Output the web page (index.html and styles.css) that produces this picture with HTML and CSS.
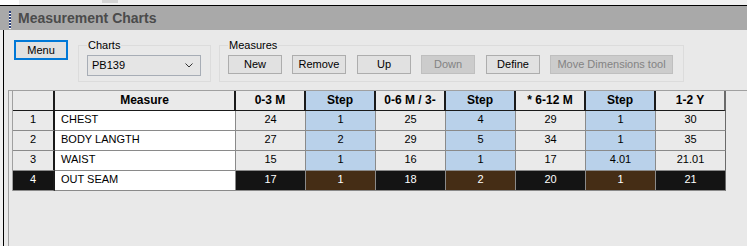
FILE: index.html
```html
<!DOCTYPE html>
<html>
<head>
<meta charset="utf-8">
<link rel="stylesheet" href="styles.css">
</head>
<body>
<div class="topstrip"><span class="ts-white"></span><span class="ts-thumb"></span></div>
<div class="titlebar"><span class="grip"></span><span class="title">Measurement Charts</span></div>
<div class="shell">
  <div class="content">
    <div class="toolbar">
      <button class="btn btn-menu">Menu</button>
      <fieldset class="group group-charts">
        <legend>Charts</legend>
        <div class="combo"><span>PB139</span><svg class="chev" width="8" height="5" viewBox="0 0 8 5"><path d="M0.5 0.5 L4 4 L7.5 0.5" fill="none" stroke="#333" stroke-width="1"/></svg></div>
      </fieldset>
      <fieldset class="group group-measures">
        <legend>Measures</legend>
        <div class="btnrow">
          <button class="btn">New</button>
          <button class="btn">Remove</button>
          <button class="btn">Up</button>
          <button class="btn btn-disabled">Down</button>
          <button class="btn">Define</button>
          <button class="btn btn-disabled btn-wide">Move Dimensions tool</button>
        </div>
      </fieldset>
    </div>
    <div class="gridframe">
      <div class="grid">
        <div class="hc"></div>
        <div class="hc">Measure</div>
        <div class="hc">0-3 M</div>
        <div class="hc step">Step</div>
        <div class="hc">0-6 M / 3-</div>
        <div class="hc step">Step</div>
        <div class="hc">* 6-12 M</div>
        <div class="hc step">Step</div>
        <div class="hc">1-2 Y</div>

        <div class="rh">1</div><div class="mc">CHEST</div>
        <div class="dc">24</div><div class="dc step">1</div>
        <div class="dc">25</div><div class="dc step">4</div>
        <div class="dc">29</div><div class="dc step">1</div>
        <div class="dc">30</div>

        <div class="rh">2</div><div class="mc">BODY LANGTH</div>
        <div class="dc">27</div><div class="dc step">2</div>
        <div class="dc">29</div><div class="dc step">5</div>
        <div class="dc">34</div><div class="dc step">1</div>
        <div class="dc">35</div>

        <div class="rh">3</div><div class="mc">WAIST</div>
        <div class="dc">15</div><div class="dc step">1</div>
        <div class="dc">16</div><div class="dc step">1</div>
        <div class="dc">17</div><div class="dc step">4.01</div>
        <div class="dc">21.01</div>

        <div class="rh sel">4</div><div class="mc">OUT SEAM</div>
        <div class="dc sel">17</div><div class="dc step sel">1</div>
        <div class="dc sel">18</div><div class="dc step sel">2</div>
        <div class="dc sel">20</div><div class="dc step sel">1</div>
        <div class="dc sel">21</div>
      </div>
    </div>
  </div>
</div>
</body>
</html>
```
FILE: styles.css
```css
* { box-sizing: border-box; }
html, body { margin: 0; padding: 0; }
body {
  width: 747px;
  height: 246px;
  overflow: hidden;
  background: #f0f0f0;
  font-family: "Liberation Sans", Arial, sans-serif;
  font-size: 11px;
  color: #000;
}
.topstrip {
  display: flex;
  height: 5px;
  background: #f0f0f0;
}
.ts-white { width: 19px; background: #fff; }
.ts-thumb { width: 16px; height: 3px; margin-left: 83px; background: #d4d4d4; }

.titlebar {
  display: flex;
  align-items: flex-start;
  height: 25px;
  border-top: 1px solid #000;
  background: #a9a9a9;
  padding-left: 9px;
}
.grip {
  width: 2px;
  height: 18px;
  margin-top: 5px;
  background: repeating-linear-gradient(to bottom, #2a3f7a 0 2px, #ffffff 2px 3px);
}
.title {
  margin-left: 7px;
  font-size: 14px;
  font-weight: bold;
  line-height: 24px;
  color: #4b4b4b;
}

.shell {
  display: flex;
  height: 216px;
  padding-left: 3px;
  background: #f0f0f0;
}
.content {
  flex: 1;
  display: flex;
  flex-direction: column;
  border-left: 1px solid #000;
  background: #e9e9e9;
  padding-top: 8px;
}
.toolbar {
  display: flex;
  align-items: stretch;
  padding-left: 10px;
}
.btn {
  font-family: "Liberation Sans", Arial, sans-serif;
  font-size: 11px;
  color: #000;
  background: #e1e1e1;
  border: 1px solid #adadad;
  height: 19px;
  width: 54px;
  padding: 0;
  margin: 0;
  line-height: 17px;
  text-align: center;
}
.btn-menu {
  height: 20px;
  margin-top: 2px;
  border: 2px solid #0078d7;
  line-height: 16px;
}
.btn-disabled {
  background: #cccccc;
  border-color: #bfbfbf;
  color: #838383;
}
.btn-wide { width: 123px; }

.group {
  margin: 0;
  border: 1px solid #dcdcdc;
  padding: 3px 8px 5px 8px;
  min-width: 0;
}
.group legend {
  font-size: 11px;
  line-height: 14px;
  padding: 0 1px;
}
.group-charts { margin-left: 10px; width: 133px; }
.group-measures { margin-left: 8px; width: 465px; }

.combo {
  display: flex;
  align-items: center;
  justify-content: space-between;
  width: 114px;
  height: 21px;
  border: 1px solid #a7adb6;
  background: #e5e5e5;
  padding: 0 7px 0 4px;
  line-height: 19px;
}
.chev { display: block; }

.btnrow {
  display: flex;
  gap: 10px;
}
.btnrow .btn:nth-child(2),
.btnrow .btn:nth-child(4) { margin-right: 1px; }

.gridframe {
  flex: 1;
  margin-top: 8px;
  margin-left: 4px;
  border-top: 1px solid #a0a0a0;
  border-left: 1px solid #a0a0a0;
  padding-left: 3px;
  background: #e9e9e9;
}
.grid {
  display: grid;
  grid-template-columns: 42px 181px repeat(7, 70px);
  grid-auto-rows: 20px;
  width: 713px;
  border-left: 1px solid #a0a0a0;
}
.hc {
  background: #eaeaea;
  border-right: 2px solid #1a1a1a;
  border-bottom: 1px solid #1a1a1a;
  font-size: 12px;
  font-weight: bold;
  line-height: 19px;
  text-align: center;
  white-space: nowrap;
  overflow: hidden;
}
.hc.step { background: #b9d1ea; }
.rh, .dc, .mc {
  line-height: 16px;
  padding-bottom: 3px;
  border-bottom: 1px solid #8a8a8a;
  white-space: nowrap;
  overflow: hidden;
}
.rh {
  background: #eaeaea;
  text-align: center;
  border-right: 2px solid #1a1a1a;
}
.mc {
  background: #ffffff;
  padding-left: 6px;
  border-right: 1px solid #8a8a8a;
}
.dc {
  background: #eaeaea;
  text-align: center;
  border-right: 1px solid #8a8a8a;
}
.dc.step { background: #b9d1ea; }
.grid > :nth-child(9n) { border-right-color: #6a6a6a; }
.sel { background: #141414; color: #ffffff; }
.dc.step.sel { background: #452d15; }
```
